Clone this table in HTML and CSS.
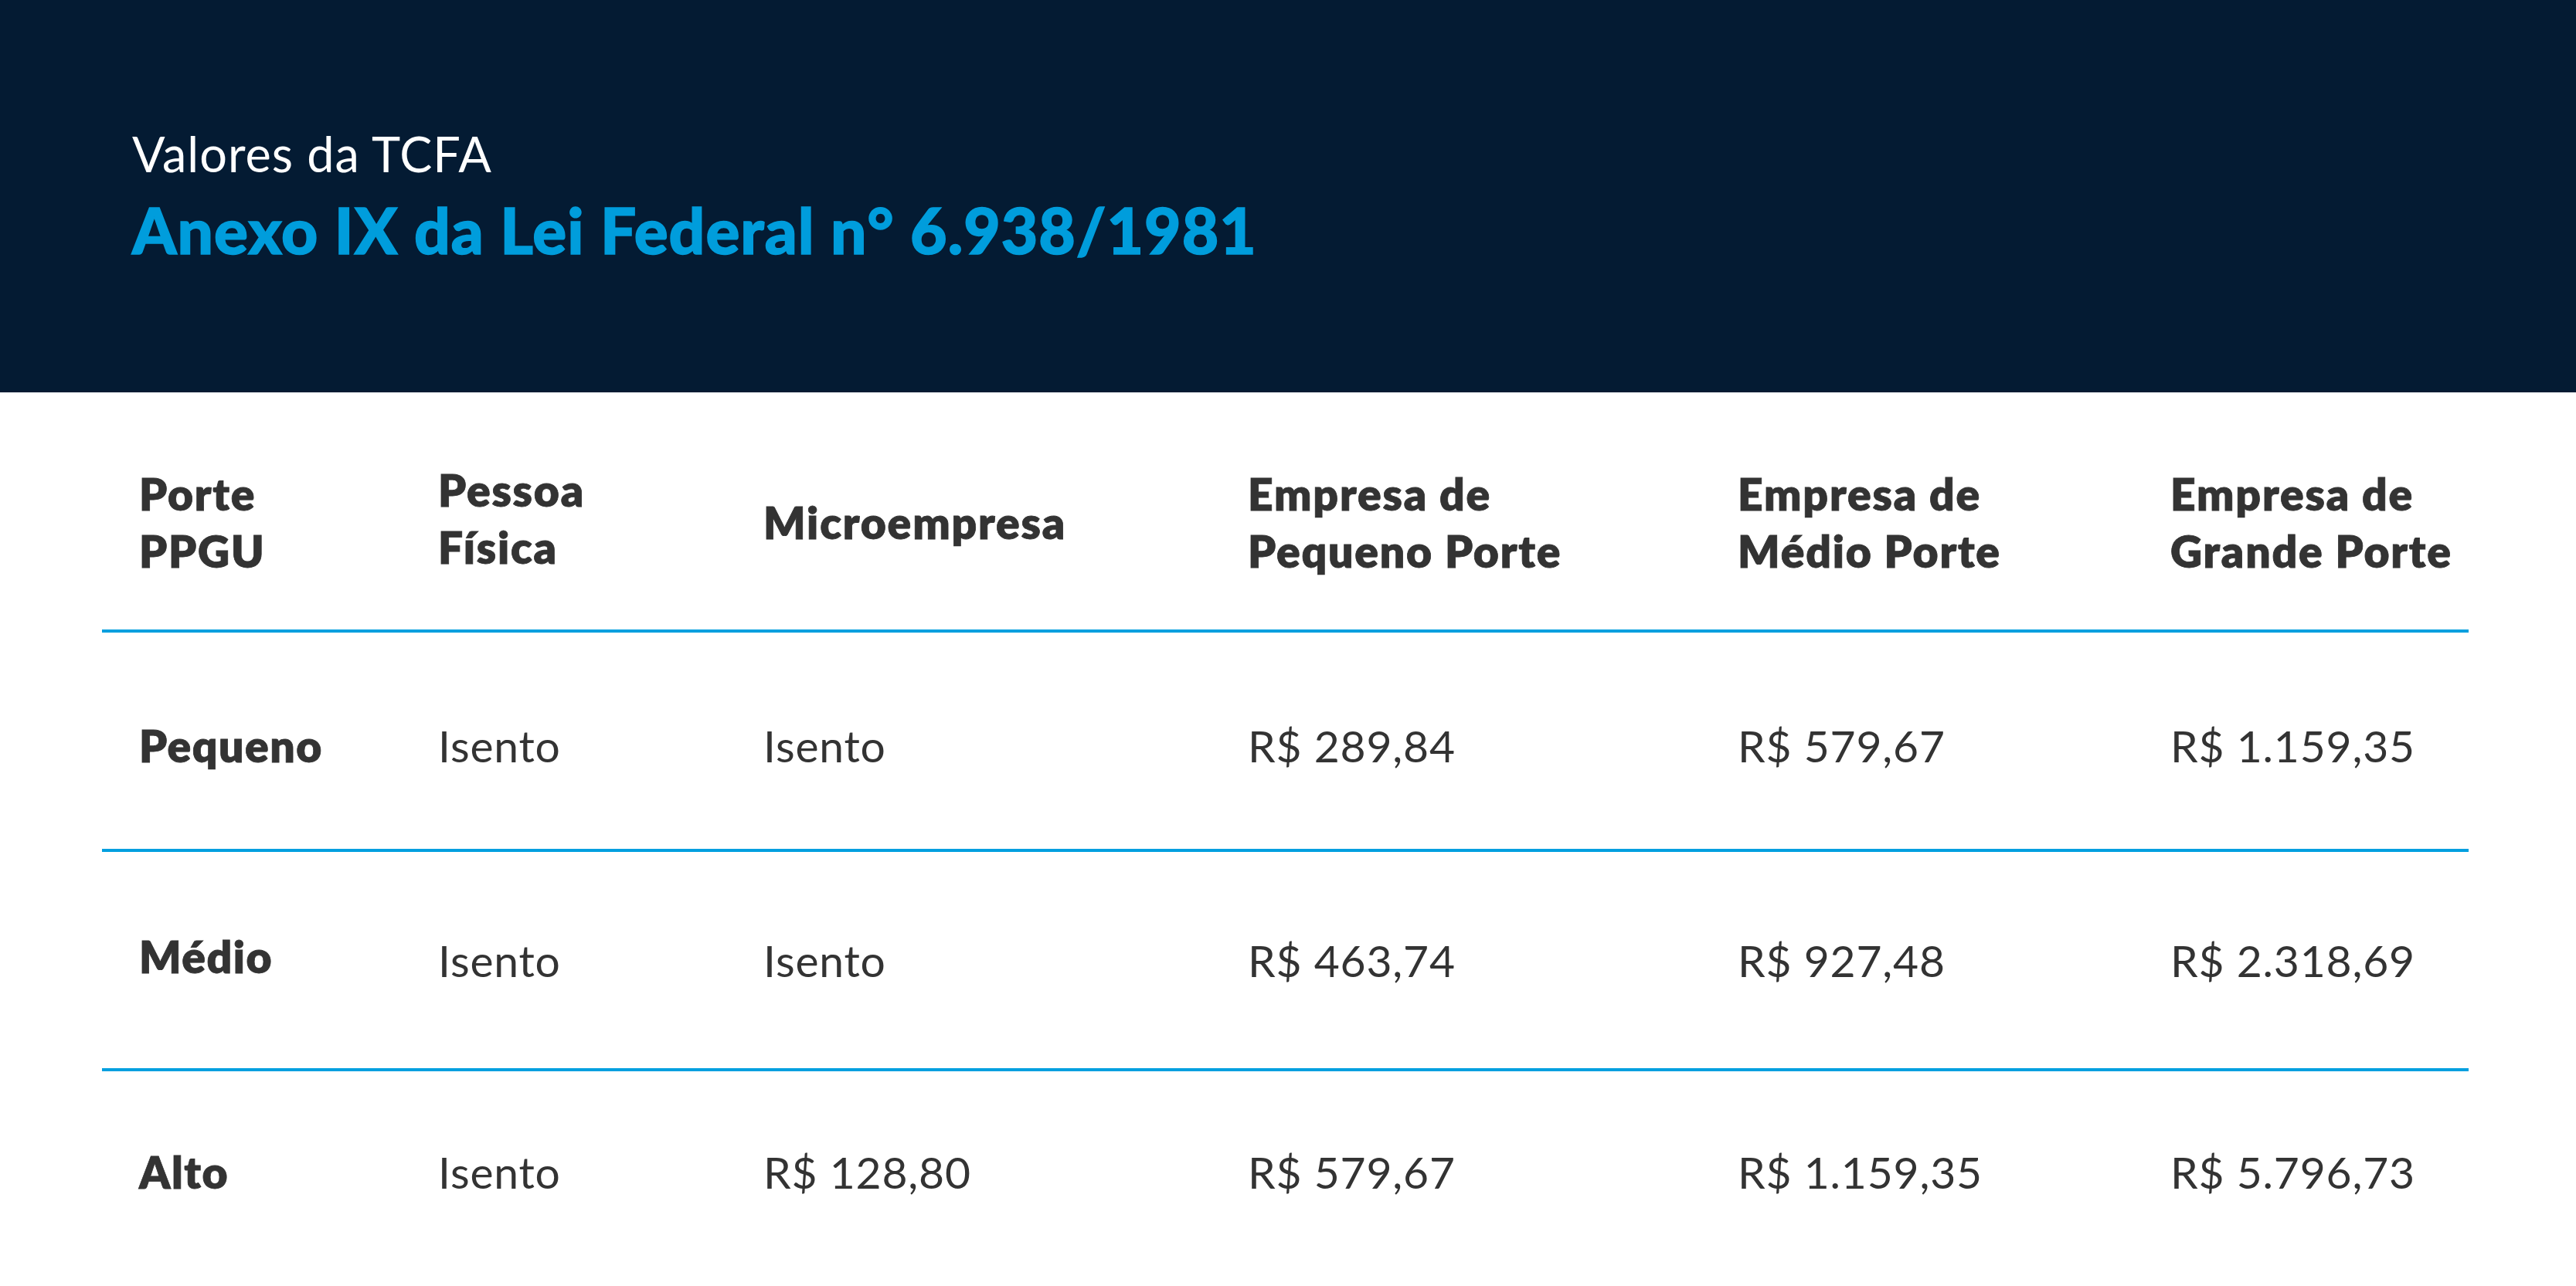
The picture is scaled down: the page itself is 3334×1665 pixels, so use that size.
FILE: index.html
```html
<!DOCTYPE html>
<html lang="pt-BR">
<head>
<meta charset="utf-8">
<title>Valores da TCFA</title>
<link rel="stylesheet" href="styles.css">
</head>
<body>
<header class="hero">
  <p class="eyebrow">Valores da TCFA</p>
  <h1 class="title">Anexo IX da Lei Federal n° 6.938/1981</h1>
</header>
<main class="table">
  <div class="row head">
    <div class="cell">Porte<br>PPGU</div>
    <div class="cell up">Pessoa<br>Física</div>
    <div class="cell">Microempresa</div>
    <div class="cell">Empresa de<br>Pequeno Porte</div>
    <div class="cell">Empresa de<br>Médio Porte</div>
    <div class="cell">Empresa de<br>Grande Porte</div>
  </div>
  <div class="row body first">
    <div class="cell label">Pequeno</div>
    <div class="cell">Isento</div>
    <div class="cell">Isento</div>
    <div class="cell">R$ 289,84</div>
    <div class="cell">R$ 579,67</div>
    <div class="cell">R$ 1.159,35</div>
  </div>
  <div class="row body">
    <div class="cell label up">Médio</div>
    <div class="cell">Isento</div>
    <div class="cell">Isento</div>
    <div class="cell">R$ 463,74</div>
    <div class="cell">R$ 927,48</div>
    <div class="cell">R$ 2.318,69</div>
  </div>
  <div class="row body last">
    <div class="cell label">Alto</div>
    <div class="cell">Isento</div>
    <div class="cell">R$ 128,80</div>
    <div class="cell">R$ 579,67</div>
    <div class="cell">R$ 1.159,35</div>
    <div class="cell">R$ 5.796,73</div>
  </div>
</main>
</body>
</html>
```

FILE: styles.css
```css
html, body {
  margin: 0;
  padding: 0;
  background: #ffffff;
}
body {
  width: 3334px;
  height: 1665px;
  overflow: hidden;
  font-family: Lato, "Open Sans", "Liberation Sans", sans-serif;
  color: #333333;
}
.hero {
  box-sizing: border-box;
  height: 508px;
  background: #041b33;
  padding: 161px 0 0 171px;
}
.eyebrow {
  margin: 0;
  font-size: 63px;
  line-height: 1.2;
  font-weight: 400;
  letter-spacing: 1px;
  color: #ffffff;
}
.title {
  margin: 11px 0 0;
  font-size: 82px;
  line-height: 1.2;
  font-weight: 900;
  color: #009ddc;
  letter-spacing: 1px;
  -webkit-text-stroke: 1.5px #009ddc;
}
.table {
  margin-left: 132px;
  width: 3063px;
}
.row {
  box-sizing: border-box;
  display: grid;
  grid-template-columns: 387px 421px 627px 634px 560px 386px;
  align-items: center;
  padding-left: 48px;
  font-size: 57px;
  line-height: 74px;
  letter-spacing: 0.8px;
}
.row.head {
  height: 307px;
  padding-top: 28px;
  font-weight: 800;
  letter-spacing: 1.8px;
  -webkit-text-stroke: 0.8px #333333;
}
.row.body {
  height: 284px;
  border-top: 4px solid #009fdf;
  font-weight: 400;
}
.row.body.first {
  padding-top: 12px;
}
.row.body.last {
  padding-bottom: 20px;
}
.cell.label {
  font-weight: 800;
  letter-spacing: 1.5px;
  -webkit-text-stroke: 0.8px #333333;
}
.cell.up {
  margin-top: -10px;
}
```
